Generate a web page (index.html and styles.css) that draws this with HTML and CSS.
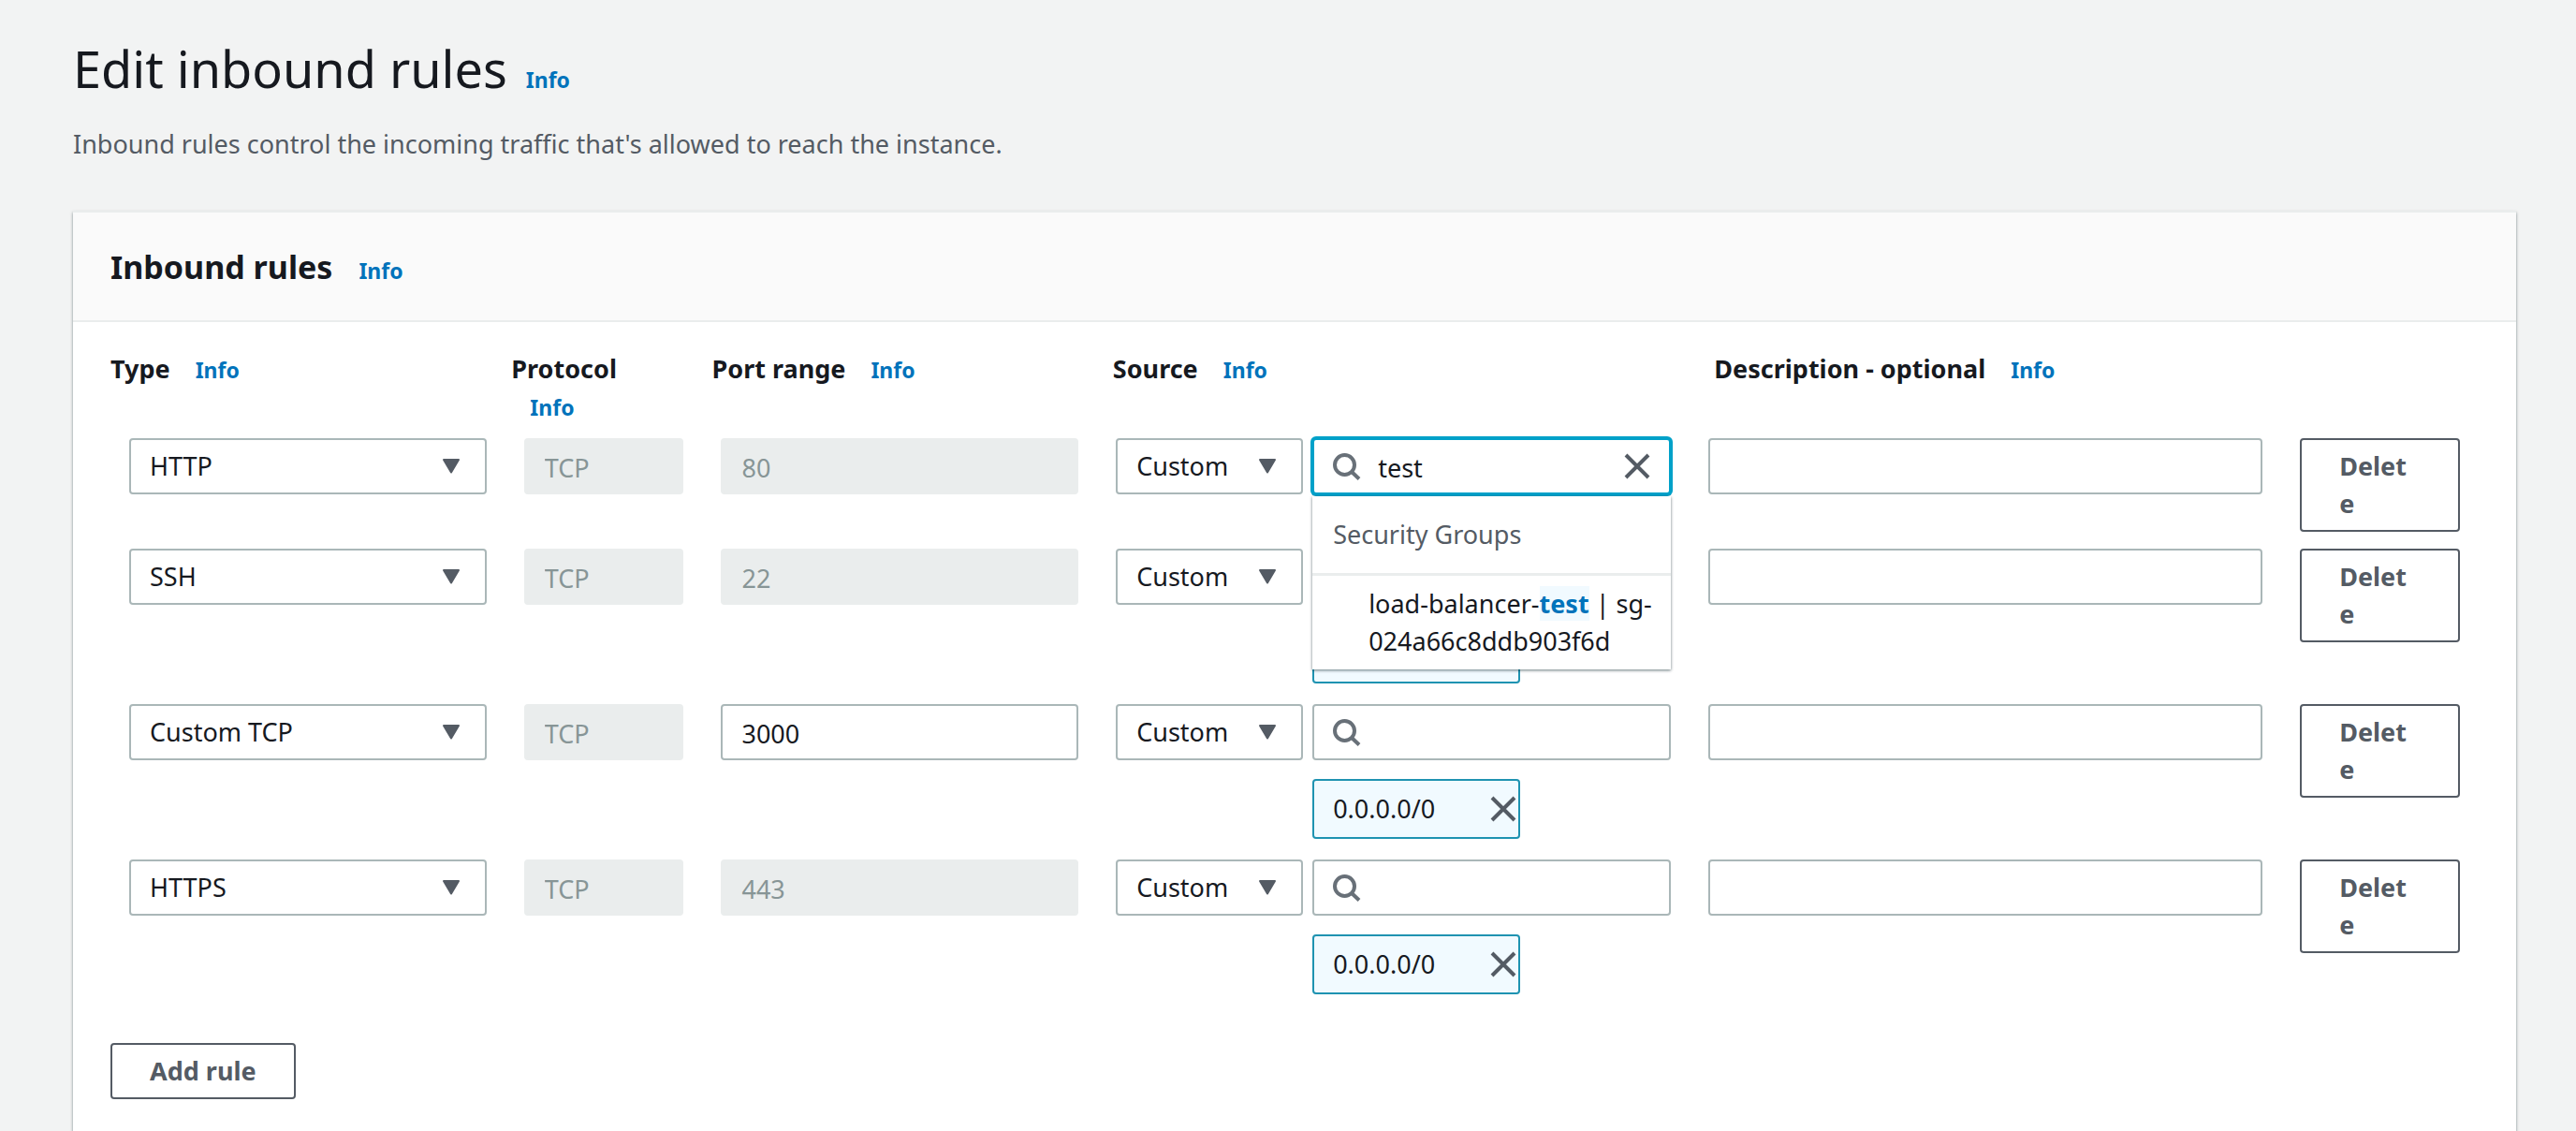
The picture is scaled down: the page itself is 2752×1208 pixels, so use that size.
FILE: index.html
```
<!DOCTYPE html>
<html lang="en">
<head>
    <meta charset="UTF-8">
    <meta name="viewport" content="width=device-width, initial-scale=1.0">
    <title>Edit inbound rules</title>
    <link rel="stylesheet" href="styles.css">
</head>
<body>
    <!-- Shared icons -->
    <svg class="icon-defs" aria-hidden="true">
        <symbol id="icon-caret" viewBox="0 0 20 16">
            <path d="M2 1h16L10 14.500z" fill="currentColor" stroke="currentColor" stroke-width="2" stroke-linejoin="round"/>
        </symbol>
        <symbol id="icon-search" viewBox="0 0 30 30">
            <circle cx="12.500" cy="12.500" r="10.500" fill="none" stroke="currentColor" stroke-width="4"/>
            <path d="M19.500 19.500l8.500 8" fill="none" stroke="currentColor" stroke-width="4"/>
        </symbol>
        <symbol id="icon-close" viewBox="0 0 28 28">
            <path d="M2 2l24 24M26 2L2 26" fill="none" stroke="currentColor" stroke-width="4"/>
        </symbol>
    </svg>

    <main class="page">
        <header class="page-header">
            <h1>Edit inbound rules</h1>
            <a class="info" href="#">Info</a>
        </header>
        <p class="page-description">Inbound rules control the incoming traffic that's allowed to reach the instance.</p>

        <section class="panel">
            <div class="panel-header">
                <h2>Inbound rules</h2>
                <a class="info" href="#">Info</a>
            </div>

            <form class="panel-body">
                <div class="labels">
                    <div><span id="label-type">Type</span> <a class="info" href="#">Info</a></div>
                    <div><span id="label-protocol">Protocol</span> <a class="info" href="#">Info</a></div>
                    <div><span id="label-port">Port range</span> <a class="info" href="#">Info</a></div>
                    <div><span id="label-source">Source</span> <a class="info" href="#">Info</a></div>
                    <div><span id="label-description">Description - optional</span> <a class="info" href="#">Info</a></div>
                </div>

                <div class="rule">
                    <div class="select">
                        <select aria-labelledby="label-type"><option>HTTP</option></select>
                        <svg class="caret"><use href="#icon-caret"/></svg>
                    </div>
                    <input type="text" value="TCP" aria-labelledby="label-protocol" disabled>
                    <input type="text" value="80" aria-labelledby="label-port" disabled>
                    <div class="source">
                        <div class="select">
                            <select aria-labelledby="label-source"><option>Custom</option></select>
                            <svg class="caret"><use href="#icon-caret"/></svg>
                        </div>
                        <div class="search-cell">
                            <div class="search search-open">
                                <svg class="icon-search"><use href="#icon-search"/></svg>
                                <input type="text" value="test" aria-label="Search source">
                                <button type="button" class="clear" aria-label="Clear"><svg class="icon-close"><use href="#icon-close"/></svg></button>
                            </div>
                            <div class="dropdown">
                                <div class="dropdown-group">Security Groups</div>
                                <div class="dropdown-option">load-balancer-<mark>test</mark> | sg-<wbr>024a66c8ddb903f6d</div>
                            </div>
                        </div>
                    </div>
                    <input type="text" aria-labelledby="label-description">
                    <button type="button" class="btn btn-delete">Delete</button>
                </div>

                <div class="rule">
                    <div class="select">
                        <select aria-labelledby="label-type"><option>SSH</option></select>
                        <svg class="caret"><use href="#icon-caret"/></svg>
                    </div>
                    <input type="text" value="TCP" aria-labelledby="label-protocol" disabled>
                    <input type="text" value="22" aria-labelledby="label-port" disabled>
                    <div class="source">
                        <div class="select">
                            <select aria-labelledby="label-source"><option>Custom</option></select>
                            <svg class="caret"><use href="#icon-caret"/></svg>
                        </div>
                        <div class="search-cell">
                            <div class="search">
                                <input type="text" aria-label="Search source">
                            </div>
                            <div class="token"></div>
                        </div>
                    </div>
                    <input type="text" aria-labelledby="label-description">
                    <button type="button" class="btn btn-delete">Delete</button>
                </div>

                <div class="rule">
                    <div class="select">
                        <select aria-labelledby="label-type"><option>Custom TCP</option></select>
                        <svg class="caret"><use href="#icon-caret"/></svg>
                    </div>
                    <input type="text" value="TCP" aria-labelledby="label-protocol" disabled>
                    <input type="text" value="3000" aria-labelledby="label-port">
                    <div class="source">
                        <div class="select">
                            <select aria-labelledby="label-source"><option>Custom</option></select>
                            <svg class="caret"><use href="#icon-caret"/></svg>
                        </div>
                        <div class="search-cell">
                            <div class="search">
                                <svg class="icon-search"><use href="#icon-search"/></svg>
                                <input type="text" aria-label="Search source">
                            </div>
                            <div class="token">
                                <span>0.0.0.0/0</span>
                                <button type="button" class="clear" aria-label="Remove"><svg class="icon-close"><use href="#icon-close"/></svg></button>
                            </div>
                        </div>
                    </div>
                    <input type="text" aria-labelledby="label-description">
                    <button type="button" class="btn btn-delete">Delete</button>
                </div>

                <div class="rule">
                    <div class="select">
                        <select aria-labelledby="label-type"><option>HTTPS</option></select>
                        <svg class="caret"><use href="#icon-caret"/></svg>
                    </div>
                    <input type="text" value="TCP" aria-labelledby="label-protocol" disabled>
                    <input type="text" value="443" aria-labelledby="label-port" disabled>
                    <div class="source">
                        <div class="select">
                            <select aria-labelledby="label-source"><option>Custom</option></select>
                            <svg class="caret"><use href="#icon-caret"/></svg>
                        </div>
                        <div class="search-cell">
                            <div class="search">
                                <svg class="icon-search"><use href="#icon-search"/></svg>
                                <input type="text" aria-label="Search source">
                            </div>
                            <div class="token">
                                <span>0.0.0.0/0</span>
                                <button type="button" class="clear" aria-label="Remove"><svg class="icon-close"><use href="#icon-close"/></svg></button>
                            </div>
                        </div>
                    </div>
                    <input type="text" aria-labelledby="label-description">
                    <button type="button" class="btn btn-delete">Delete</button>
                </div>

                <button type="button" class="btn btn-add">Add rule</button>
            </form>
        </section>
    </main>
</body>
</html>
```
FILE: styles.css
```
* {
    box-sizing: border-box;
}
body {
    margin: 0;
    background-color: #f2f3f3;
    color: #16191f;
    font-family: "Noto Sans", "Open Sans", sans-serif;
    font-size: 27px;
    line-height: 40px;
}
input, select, button {
    font: inherit;
    color: inherit;
}
h1, h2, p {
    margin: 0;
}
h1 {
    font-size: 54px;
    font-weight: 400;
    line-height: 72px;
}
h2 {
    font-size: 34px;
    line-height: 44px;
}
.icon-defs {
    display: none;
}
.page {
    display: flex;
    flex-direction: column;
    min-height: 100vh;
    padding: 37px 64px 0 78px;
}
.page-header {
    display: flex;
    align-items: baseline;
    gap: 20px;
}
.info {
    color: #0073bb;
    font-size: 23px;
    font-weight: 700;
    line-height: 32px;
    text-decoration: none;
}
.page-description {
    margin-top: 25px;
    color: #545b64;
}

/* Panel */
.panel {
    flex: 1;
    margin-top: 51px;
    background-color: #fff;
    box-shadow: 0 2px 3px rgba(0, 28, 36, 0.5);
}
.panel-header {
    display: flex;
    align-items: baseline;
    gap: 28px;
    padding: 36px 40px 35px;
    background-color: #fafafa;
    border-top: 2px solid #eaeded;
    border-bottom: 2px solid #eaeded;
}
.panel-body {
    padding: 30px 40px 0;
}

/* Column labels */
.labels {
    display: grid;
    grid-template-columns: 2fr 1fr 2fr 3fr 3fr 1fr;
    margin-right: -40px;
    font-weight: 700;
}
.labels .info {
    margin-left: 20px;
}
.labels div {
    padding-right: 40px;
}

/* Rules */
.rule {
    display: grid;
    grid-template-columns: 2fr 1fr 2fr 3fr 3fr 1fr;
    align-items: start;
    margin-bottom: 18px;
}
.labels + .rule {
    margin-top: 14px;
}
.rule > * {
    min-width: 0;
    margin: 0 20px;
}
.rule input,
.select select {
    height: 60px;
    padding: 0 20px;
    background-color: #fff;
    border: 2px solid #aab7b8;
    border-radius: 4px;
    outline: none;
}
.rule input {
    padding-top: 2px;
}
.rule input:disabled {
    background-color: #eaeded;
    border-color: #eaeded;
    color: #879596;
}
.select {
    position: relative;
}
.select select {
    width: 100%;
    appearance: none;
}
.caret {
    position: absolute;
    top: 22px;
    right: 28px;
    width: 20px;
    height: 16px;
    color: #545b64;
    pointer-events: none;
}

/* Source column */
.source {
    display: grid;
    grid-template-columns: 200px 1fr;
    gap: 10px;
}
.search-cell {
    position: relative;
    min-width: 0;
}
.search {
    position: relative;
}
.search input {
    width: 100%;
    padding-left: 68px;
}
.search-open input {
    border-color: #00a1c9;
    box-shadow: 0 0 0 2px #00a1c9;
}
.icon-search {
    position: absolute;
    top: 16px;
    left: 22px;
    width: 30px;
    height: 30px;
    color: #687078;
}
.icon-close {
    display: block;
    width: 28px;
    height: 28px;
}
.clear {
    padding: 0;
    background: none;
    border: none;
    color: #545b64;
    cursor: pointer;
}
.search .clear {
    position: absolute;
    top: 16px;
    right: 22px;
}
.dropdown {
    position: absolute;
    top: 62px;
    left: 0;
    right: 0;
    z-index: 1;
    background-color: #fff;
    box-shadow: 0 1px 3px rgba(0, 28, 36, 0.6);
}
.dropdown-group {
    padding: 21px 22px;
    border-bottom: 3px solid #eaeded;
    color: #545b64;
}
.dropdown-option {
    padding: 10px 0 10px 60px;
}
.dropdown mark {
    background-color: #f1faff;
    color: #0073bb;
    font-weight: 700;
}
.token {
    display: flex;
    align-items: center;
    justify-content: space-between;
    width: 222px;
    height: 64px;
    margin: 20px 0 4px;
    padding: 0 2px 0 20px;
    background-color: #f1faff;
    border: 2px solid #1f93b1;
    border-radius: 4px;
}

/* Buttons */
.btn {
    padding: 8px 40px;
    background-color: #fff;
    border: 2px solid #545b64;
    border-radius: 4px;
    color: #545b64;
    font-weight: 700;
    cursor: pointer;
}
.btn-delete {
    text-align: left;
    word-break: break-all;
}
.btn-add {
    margin-top: 30px;
}
```
